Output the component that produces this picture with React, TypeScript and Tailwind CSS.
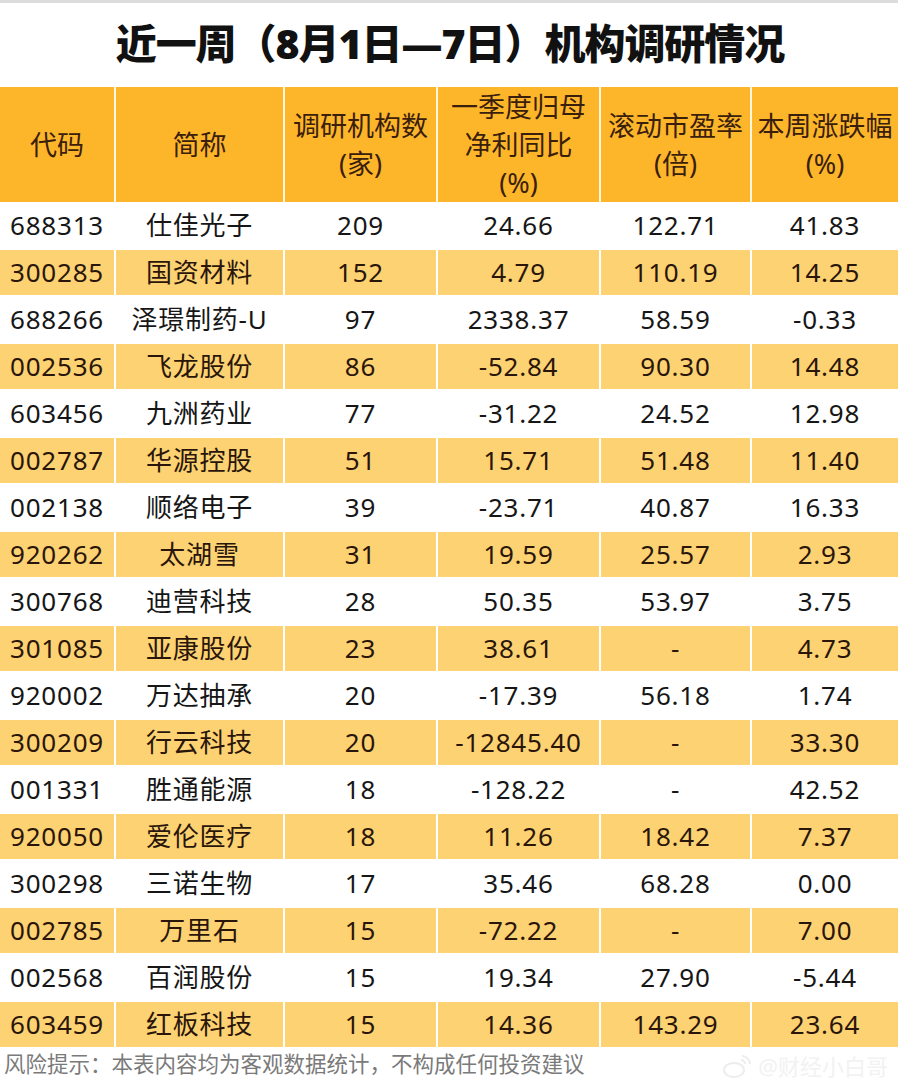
const rows: string[][] = [
  ['688313', '仕佳光子', '209', '24.66', '122.71', '41.83'],
  ['300285', '国资材料', '152', '4.79', '110.19', '14.25'],
  ['688266', '泽璟制药-U', '97', '2338.37', '58.59', '-0.33'],
  ['002536', '飞龙股份', '86', '-52.84', '90.30', '14.48'],
  ['603456', '九洲药业', '77', '-31.22', '24.52', '12.98'],
  ['002787', '华源控股', '51', '15.71', '51.48', '11.40'],
  ['002138', '顺络电子', '39', '-23.71', '40.87', '16.33'],
  ['920262', '太湖雪', '31', '19.59', '25.57', '2.93'],
  ['300768', '迪营科技', '28', '50.35', '53.97', '3.75'],
  ['301085', '亚康股份', '23', '38.61', '-', '4.73'],
  ['920002', '万达抽承', '20', '-17.39', '56.18', '1.74'],
  ['300209', '行云科技', '20', '-12845.40', '-', '33.30'],
  ['001331', '胜通能源', '18', '-128.22', '-', '42.52'],
  ['920050', '爱伦医疗', '18', '11.26', '18.42', '7.37'],
  ['300298', '三诺生物', '17', '35.46', '68.28', '0.00'],
  ['002785', '万里石', '15', '-72.22', '-', '7.00'],
  ['002568', '百润股份', '15', '19.34', '27.90', '-5.44'],
  ['603459', '红板科技', '15', '14.36', '143.29', '23.64'],
];

const headers: string[][] = [
  ['代码'],
  ['简称'],
  ['调研机构数', '(家)'],
  ['一季度归母', '净利同比', '(%)'],
  ['滚动市盈率', '(倍)'],
  ['本周涨跌幅', '(%)'],
];

const grid = 'grid grid-cols-[114px_167px_151px_161px_149px_1fr] gap-x-[2px]';

export default function App() {
  return (
    <div className="w-[898px] h-[1080px] overflow-hidden bg-white font-['Noto_Sans','Noto_Sans_CJK_SC',sans-serif]">
      <div className="h-[3px] bg-[#dcdcdc]" />
      <h1 className="h-[84px] flex items-center justify-center text-[41px] font-black text-[#111] tracking-tight pb-[2px] pl-[2px]">
        近一周（8月1日—7日）机构调研情况
      </h1>

      <div className={`${grid} h-[115px] bg-[#fff7e0]`}>
        {headers.map((lines, i) => (
          <div
            key={i}
            className="bg-[#fdb62a] flex flex-col items-center justify-center text-[27px] leading-[38px] text-[#3a200c] whitespace-nowrap"
          >
            {lines.map((l) => (
              <span key={l}>{l}</span>
            ))}
          </div>
        ))}
      </div>

      {rows.map((r, ri) => {
        const odd = ri % 2 === 1;
        return (
          <div
            key={r[0]}
            className={`${grid} h-[47px] ${odd ? 'border-y border-white' : ''}`}
          >
            {r.map((c, ci) => (
              <div
                key={ci}
                className={`flex items-center justify-center text-[26px] tracking-[0.03em] whitespace-nowrap ${
                  odd ? 'bg-[#fcd272] text-[#2a150a]' : 'bg-white text-[#161616]'
                }`}
              >
                {c}
              </div>
            ))}
          </div>
        );
      })}

      <div className="relative flex items-center h-[32px] pl-[4px] text-[21.5px] text-[#7a7a7a] whitespace-nowrap">
        风险提示：本表内容均为客观数据统计，不构成任何投资建议
        <div className="absolute right-[10px] top-[2px] flex items-center gap-[6px] text-[#f2f2f2] text-[22px]">
          <svg width="30" height="26" viewBox="0 0 30 26" fill="none" stroke="#ededed" strokeWidth="2">
            <ellipse cx="12" cy="16" rx="10" ry="7" />
            <path d="M20 2a8 8 0 0 1 8 8M19 6a4 4 0 0 1 4 4" />
          </svg>
          <span>@财经小白哥</span>
        </div>
      </div>
    </div>
  );
}
